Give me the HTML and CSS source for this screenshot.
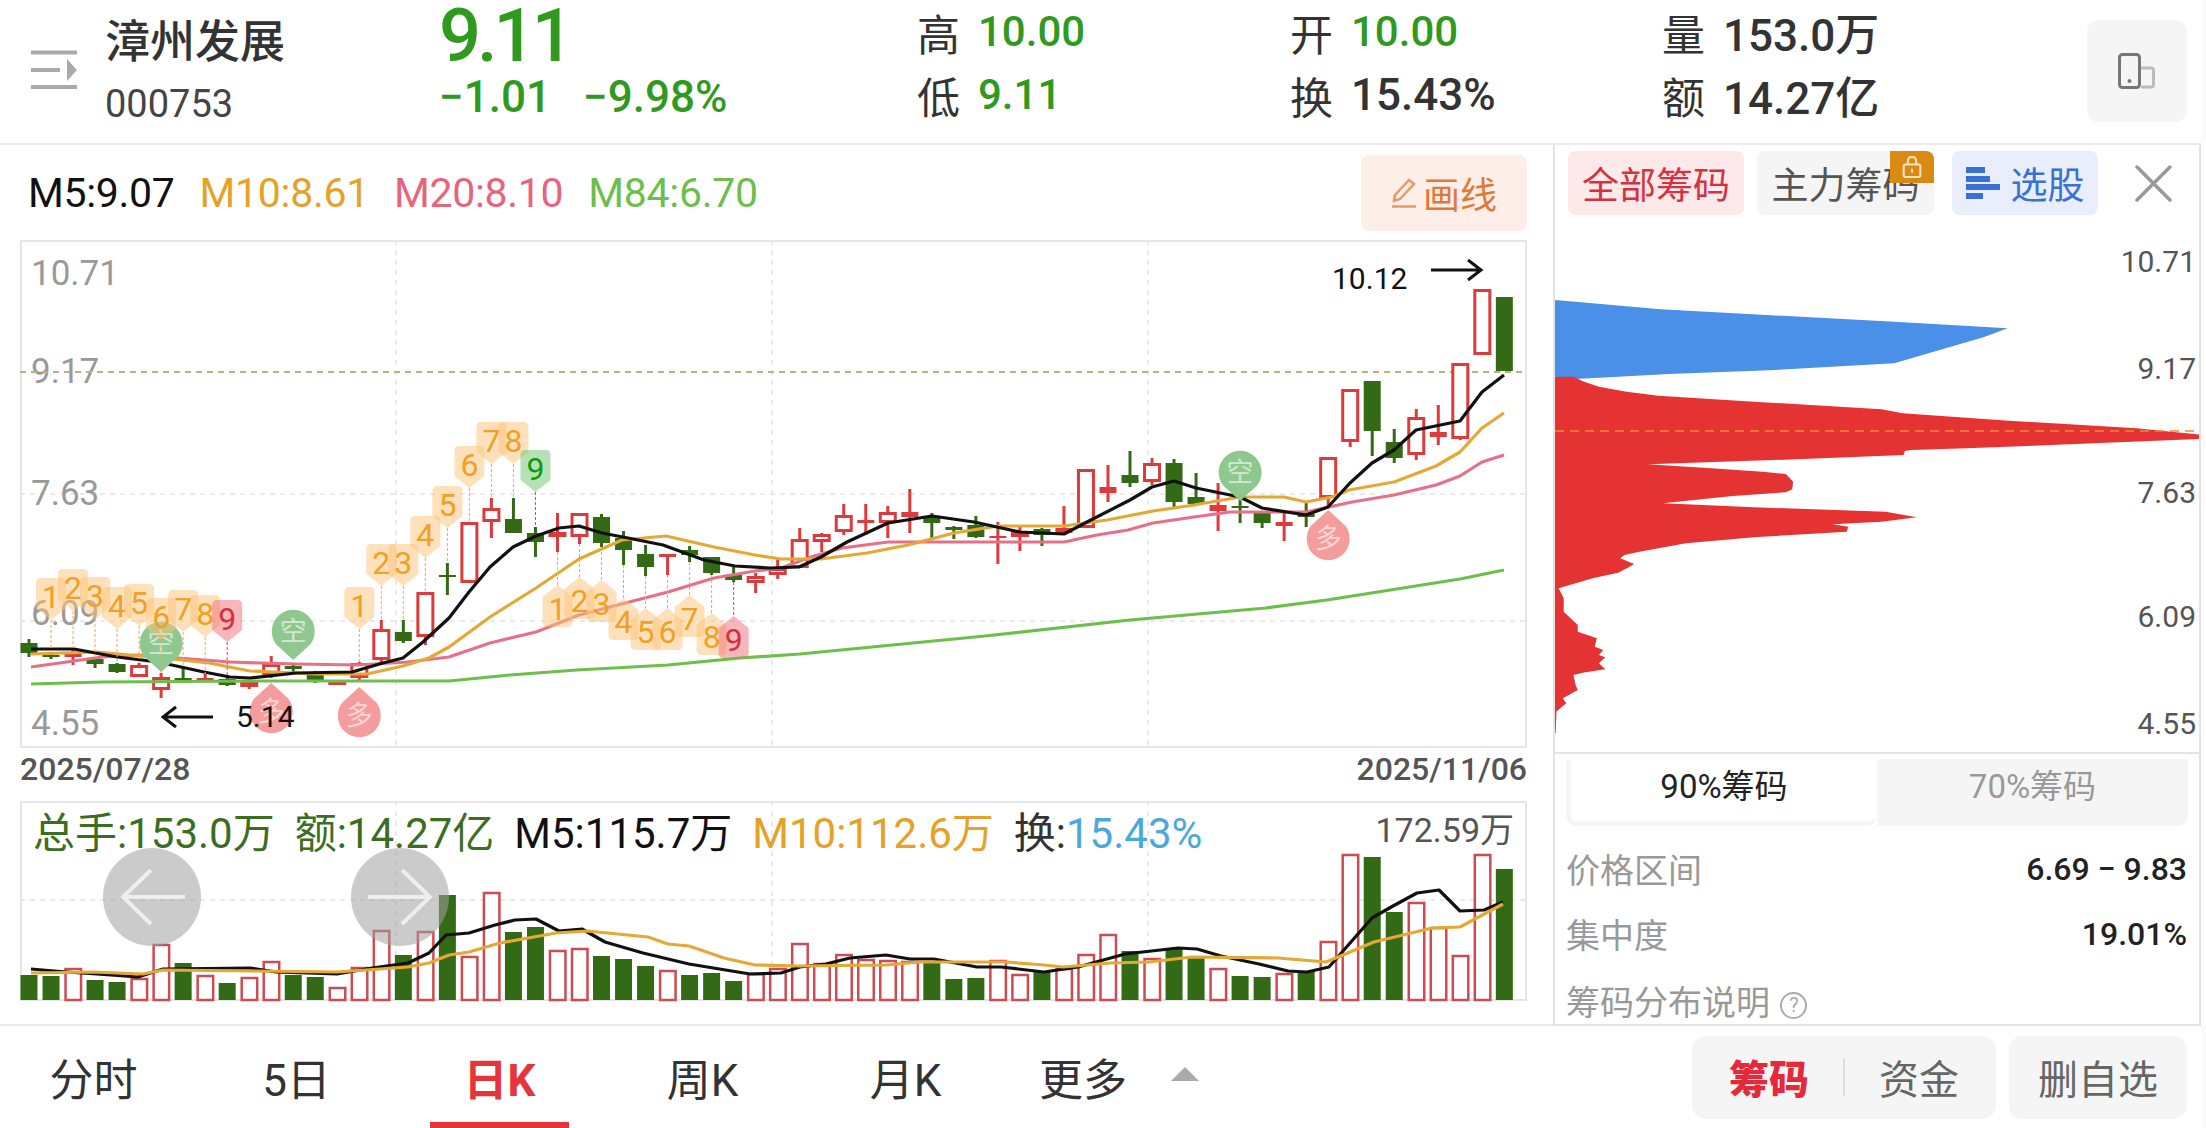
FILE: index.html
```html
<!doctype html>
<html lang="zh-CN">
<head>
	<meta charset="utf-8">
	<meta name="viewport" content="width=device-width, initial-scale=1">
	<title>漳州发展 000753</title>
	<link rel="stylesheet" href="styles.css">
</head>
<body>

	<header class="quote-bar">
		<svg class="menu-icon" viewBox="0 0 46 40">
			<path d="M0 2.500H46M0 37H46" />
			<path d="M0 20H29" />
			<polygon points="36,9 46,20 36,31" />
		</svg>
		<div class="stock">
			<h1>漳州发展</h1>
			<span>000753</span>
		</div>
		<div class="price">
			<div class="price-now">9.11</div>
			<div class="price-change"><span>−1.01</span><span>−9.98%</span></div>
		</div>
		<div class="stat-col">
			<div class="stat"><span>高</span><b class="down">10.00</b></div>
			<div class="stat"><span>低</span><b class="down">9.11</b></div>
		</div>
		<div class="stat-col">
			<div class="stat"><span>开</span><b class="down">10.00</b></div>
			<div class="stat"><span>换</span><b>15.43%</b></div>
		</div>
		<div class="stat-col">
			<div class="stat"><span>量</span><b>153.0万</b></div>
			<div class="stat"><span>额</span><b>14.27亿</b></div>
		</div>
		<div class="device-btn">
			<svg viewBox="0 0 38 36">
				<path class="device-back" d="M23 15h10q2.500 0 2.500 2.500v14q0 2.500-2.500 2.500H23" />
				<rect class="device-front" x="1.500" y="1.500" width="20" height="33" rx="3" />
				<circle class="device-dot" cx="11.500" cy="28" r="2" />
			</svg>
		</div>
	</header>

	<main class="workspace">

		<section class="kline-pane">
			<div class="ma-row">
				<span class="ma5">M5:9.07</span>
				<span class="ma10">M10:8.61</span>
				<span class="ma20">M20:8.10</span>
				<span class="ma84">M84:6.70</span>
				<div class="draw-btn">
					<svg viewBox="0 0 26 30">
						<path d="M18 2l5 4L9 21l-6 2 1-6z" />
						<path d="M1 28.500H25" />
					</svg>
					画线
				</div>
			</div>
			<svg id="kline" class="kline" viewBox="20 240 1507 508"></svg>
			<div class="date-row"><span>2025/07/28</span><span>2025/11/06</span></div>
			<div class="volume">
				<svg id="volume" class="volume-chart" viewBox="20 801 1507 201"></svg>
				<div class="vol-legend">
					<span class="vol-green">总手:153.0万</span>
					<span class="vol-green">额:14.27亿</span>
					<span class="ma5">M5:115.7万</span>
					<span class="ma10">M10:112.6万</span>
					<span>换:<i class="vol-blue">15.43%</i></span>
				</div>
				<span class="vol-max">172.59万</span>
			</div>
		</section>

		<aside class="chip-pane">
			<div class="chip-tabs">
				<div class="chip-tab chip-all">全部筹码</div>
				<div class="chip-tab chip-main">
					主力筹码
					<span class="lock">
						<svg viewBox="0 0 24 28">
							<path d="M7 11V7q0-5 5-5t5 5v4" />
							<rect x="2" y="11" width="20" height="15" rx="2" />
							<path d="M12 16v5" />
						</svg>
					</span>
				</div>
				<div class="chip-tab chip-pick">
					<svg viewBox="0 0 34 32">
						<path d="M0 0h19v6H0zM0 9h24v6H0zM0 17h34v6H0zM0 26h17v6H0z" />
					</svg>
					选股
				</div>
				<svg class="chip-close" viewBox="0 0 36 36"><path d="M2 2L34 34M34 2L2 34" /></svg>
			</div>
			<svg class="chip-chart" viewBox="0 0 644 497">
				<g transform="scale(.4248 .3333) translate(-31.500 0)">
					<polygon class="chip-blue" points="30,150 280,178 830,215 1097,235 1040,262 830,340 550,360 300,372 80,387 30,380" />
					<polygon class="chip-red" points="30,380 75,380 100,395 135,410 200,425 275,437 500,455 800,478 850,490 1100,512 1400,535 1556,555 1556,567 1300,580 1000,595 870,600 855,603 852,615 600,628 250,643 400,655 520,665 575,672 592,695 590,718 575,727 450,738 285,760 500,772 810,785 883,802 800,815 685,823 722,830 718,845 500,862 340,880 230,905 195,915 185,925 218,942 205,952 180,968 120,985 40,1015 52,1045 52,1085 85,1125 85,1145 130,1165 125,1190 145,1200 135,1215 150,1222 135,1240 150,1258 100,1268 75,1275 80,1305 85,1320 50,1345 58,1360 35,1385 33,1450 30,1450" />
				</g>
				<line class="chip-cost" x1="0" y1="181" x2="644" y2="181" />
				<text class="chip-axis" x="641" y="11">10.71</text>
				<text class="chip-axis" x="641" y="118">9.17</text>
				<text class="chip-axis" x="641" y="242">7.63</text>
				<text class="chip-axis" x="641" y="366">6.09</text>
				<text class="chip-axis" x="641" y="473">4.55</text>
			</svg>
			<div class="range-switch">
				<div class="range-on">90%筹码</div>
				<div>70%筹码</div>
			</div>
			<div class="chip-row"><span>价格区间</span><b>6.69 − 9.83</b></div>
			<div class="chip-row"><span>集中度</span><b>19.01%</b></div>
			<div class="chip-row chip-row-last">
				<span class="chip-help">筹码分布说明 <i>?</i></span>
			</div>
		</aside>

	</main>

	<footer class="tab-bar">
		<nav class="periods">
			<a>分时</a>
			<a>5日</a>
			<a class="period-on">日K</a>
			<a>周K</a>
			<a>月K</a>
			<a class="period-more">更多<i></i></a>
		</nav>
		<div class="action-group">
			<span class="action-on">筹码</span>
			<span class="action-split"></span>
			<span>资金</span>
		</div>
		<div class="action-remove">删自选</div>
	</footer>

	<script src="chart.js"></script>
</body>
</html>
```

FILE: styles.css
```css
:root {
	--line: #ebebeb;
	--grid: #e6e6e6;
	--panel: #f5f5f5;
	--text: #333;
	--muted: #999;
	--red: #dc3a3c;
	--green: #2f9a1e;
	--bar-green: #336a16;
	--ma5: #111;
	--ma10: #e5a128;
	--ma20: #e8647c;
	--ma84: #6cbf4a;
	--page-width: 2201px;
}

* {
	box-sizing: border-box;
}

html, body {
	height: 100%;
}

body {
	width: 2206px;
	height: 1128px;
	margin: 0;
	overflow: hidden;
	display: flex;
	flex-direction: column;
	background: #fbfbfb;
	color: var(--text);
	font-family: Roboto, "Noto Sans CJK SC", sans-serif;
}

/* top quote bar */
.quote-bar {
	flex: none;
	width: var(--page-width);
	height: 145px;
	display: grid;
	grid-template-columns: 74px 334px 478px 373px 372px 425px 100px;
	padding-left: 31px;
	background: #fff;
	border-bottom: 2px solid var(--line);
}

.menu-icon {
	width: 46px;
	height: 40px;
	margin-top: 50px;
}
.menu-icon path {
	stroke: #aaa;
	stroke-width: 4;
	fill: none;
}
.menu-icon polygon {
	fill: #aaa;
}

.stock h1 {
	margin: 12px 0 0;
	font-size: 45px;
	font-weight: 500;
	line-height: 62px;
}
.stock span {
	display: block;
	margin-top: 2px;
	font-size: 38px;
	line-height: 56px;
	color: #444;
}

.price {
	color: var(--green);
}
.price-now {
	font-size: 74px;
	font-weight: 500;
	line-height: 72px;
	letter-spacing: -4px;
}
.price-change {
	display: flex;
	gap: 32px;
	font-size: 44px;
	font-weight: 500;
	line-height: 52px;
	margin-top: -1px;
}

.stat {
	height: 63px;
	display: flex;
	align-items: center;
	gap: 18px;
	font-size: 43px;
}
.stat b {
	font-size: 44px;
	font-weight: 500;
}
.stat .down {
	font-size: 42px;
	color: var(--green);
}

.device-btn {
	height: 102px;
	margin-top: 20px;
	display: flex;
	align-items: center;
	justify-content: center;
	border-radius: 12px;
	background: var(--panel);
}
.device-btn svg {
	width: 38px;
	height: 36px;
}
.device-front {
	fill: none;
	stroke: #777;
	stroke-width: 3;
}
.device-back {
	fill: none;
	stroke: #bbb;
	stroke-width: 3;
}
.device-dot {
	fill: #777;
}

/* main area */
.workspace {
	flex: none;
	width: var(--page-width);
	height: 881px;
	display: flex;
	background: #fff;
}

.kline-pane {
	flex: none;
	width: 1553px;
	height: 881px;
	padding-left: 20px;
	border-bottom: 2px solid var(--line);
}

.ma-row {
	height: 95px;
	display: flex;
	align-items: center;
	gap: 25px;
	width: 1507px;
	padding-left: 8px;
	font-size: 41px;
	letter-spacing: -0.3px;
}
.ma5 { color: var(--ma5); }
.ma10 { color: var(--ma10); }
.ma20 { color: var(--ma20); }
.ma84 { color: var(--ma84); }

.draw-btn {
	margin-left: auto;
	width: 166px;
	height: 76px;
	display: flex;
	align-items: center;
	justify-content: center;
	gap: 6px;
	border-radius: 8px;
	background: #fdeee8;
	color: #dd7a3a;
	font-size: 37px;
	letter-spacing: 0;
}
.draw-btn svg {
	width: 26px;
	height: 30px;
}
.draw-btn path {
	fill: none;
	stroke: #e59a68;
	stroke-width: 2.500;
}

.kline {
	display: block;
	width: 1507px;
	height: 508px;
}

.date-row {
	width: 1507px;
	height: 53px;
	padding-bottom: 12px;
	display: flex;
	justify-content: space-between;
	align-items: center;
	font-size: 32px;
	font-weight: 500;
	color: #555;
}

.volume {
	position: relative;
	width: 1507px;
	height: 201px;
}
.volume-chart {
	display: block;
	width: 1507px;
	height: 201px;
}
.vol-legend {
	position: absolute;
	top: 11px;
	left: 13px;
	display: flex;
	gap: 20px;
	font-size: 42px;
	line-height: 44px;
}
.vol-green { color: #3c6e1f; }
.vol-legend i {
	font-style: normal;
}
.vol-blue { color: #4aa8dd; }
.vol-max {
	position: absolute;
	top: 8px;
	right: 13px;
	font-size: 34px;
	line-height: 42px;
	color: #555;
}

/* svg parts of the charts */
.frame {
	fill: none;
	stroke: var(--grid);
	stroke-width: 2;
}
.grid-line {
	stroke: #e4e4e4;
	stroke-width: 1.500;
	stroke-dasharray: 5 5;
}
.last-line {
	stroke: #bdae84;
	stroke-width: 2;
	stroke-dasharray: 6 5;
}
.axis-left {
	font-size: 35px;
	fill: var(--muted);
	dominant-baseline: central;
}
.wick-up, .wick-down {
	stroke-width: 3;
}
.wick-up { stroke: var(--red); }
.wick-down { stroke: var(--bar-green); }
.body-hollow {
	fill: #fff;
	stroke: var(--red);
	stroke-width: 3;
}
.body-red { fill: var(--red); }
.body-green { fill: var(--bar-green); }
.vol-up {
	fill: #fff;
	stroke: #cc4c52;
	stroke-width: 2.500;
}
.ma-line {
	fill: none;
	stroke-width: 3.200;
	stroke-linejoin: round;
}
.line-ma5 { stroke: var(--ma5); }
.line-ma10 { stroke: #e6a835; }
.line-ma20 { stroke: #e77087; }
.line-ma84 { stroke: var(--ma84); }

.stem {
	stroke: #f0a94a;
	stroke-width: 1;
	stroke-dasharray: 3 2;
}
.stem-red { stroke: #d9484c; }
.stem-green { stroke: #2aa02a; }

.td-badge { fill: rgba(253, 196, 120, .5); }
.td-badge-red { fill: rgba(240, 110, 115, .5); }
.td-badge-green { fill: rgba(90, 190, 90, .45); }
.td-num {
	font-size: 32px;
	fill: #f0a024;
	text-anchor: middle;
	dominant-baseline: central;
}
.td-num-red { fill: #d62f3c; }
.td-num-green { fill: #0c9a0c; }

.pin-green { fill: #8fc88f; }
.pin-red { fill: #f59c9c; }
.pin-text {
	font-size: 27px;
	text-anchor: middle;
	dominant-baseline: central;
	fill: rgba(255, 255, 255, .6);
}
.note {
	font-size: 30px;
	fill: #111;
	dominant-baseline: central;
}
.note-arrow {
	fill: none;
	stroke: #111;
	stroke-width: 3;
}
.nav-circle { fill: rgba(160, 160, 160, .55); }
.nav-arrow {
	fill: none;
	stroke: #eee;
	stroke-width: 4;
}

/* right chip panel */
.chip-pane {
	flex: none;
	width: 648px;
	height: 881px;
	overflow: hidden;
	border-left: 2px solid #e4e4e4;
	border-right: 2px solid #e4e4e4;
	border-bottom: 2px solid #e4e4e4;
}

.chip-tabs {
	margin-top: 6px;
	padding-left: 13px;
	height: 64px;
	display: flex;
	align-items: center;
}
.chip-tab {
	position: relative;
	height: 64px;
	display: flex;
	align-items: center;
	justify-content: center;
	border-radius: 8px;
	font-size: 37px;
}
.chip-all {
	width: 176px;
	background: #fde8ea;
	color: #d7303f;
}
.chip-main {
	width: 177px;
	margin-left: 13px;
	background: var(--panel);
	color: #555;
}
.chip-pick {
	width: 146px;
	margin-left: 18px;
	gap: 11px;
	background: #e8eefb;
	color: #3a6fd6;
}
.chip-pick svg {
	width: 34px;
	height: 32px;
	fill: #3a6fd6;
}
.lock {
	position: absolute;
	top: 0;
	right: 0;
	width: 44px;
	height: 32px;
	display: flex;
	align-items: center;
	justify-content: center;
	border-radius: 0 8px 0 0;
	background: #d98a12;
}
.lock svg {
	width: 20px;
	height: 24px;
}
.lock path, .lock rect {
	fill: none;
	stroke: #f6e3c0;
	stroke-width: 2.500;
}
.chip-close {
	width: 37px;
	height: 37px;
	margin-left: 37px;
}
.chip-close path {
	fill: none;
	stroke: #999;
	stroke-width: 3.500;
	stroke-linecap: round;
}

.chip-chart {
	display: block;
	width: 644px;
	height: 497px;
	margin-top: 35px;
	overflow: visible;
}
.chip-blue { fill: #4a8fe8; }
.chip-red { fill: #e53333; }
.chip-cost {
	stroke: #f08a3c;
	stroke-width: 1.500;
	stroke-dasharray: 9 6;
}
.chip-axis {
	font-size: 30px;
	fill: #555;
	text-anchor: end;
	dominant-baseline: central;
}

.range-switch {
	margin-top: 5px;
	border-top: 2px solid #e4e4e4;
	padding: 5px 11px 0;
	height: 74px;
	display: grid;
	grid-template-columns: 1fr 1fr;
	font-size: 33px;
	text-align: center;
	color: var(--muted);
}
.range-switch > div {
	line-height: 56px;
	background: var(--panel);
}
.range-switch > div:last-child {
	border-radius: 0 0 10px 0;
	height: 67px;
}
.range-switch .range-on {
	height: 67px;
	color: #222;
	background: #fff;
	border: solid var(--panel);
	border-width: 0 0 5px 5px;
	border-radius: 0 0 10px 10px;
}

.chip-row {
	height: 65px;
	margin: 0 12px 0 11px;
	display: flex;
	align-items: center;
	justify-content: space-between;
	font-size: 34px;
	color: var(--muted);
}
.range-switch + .chip-row {
	margin-top: 10px;
}
.chip-row b {
	font-size: 32px;
	font-weight: 500;
	color: #222;
}
.chip-row-last {
	height: 57px;
	align-items: flex-start;
	padding-top: 17px;
	line-height: 40px;
}
.chip-help i {
	display: inline-flex;
	align-items: center;
	justify-content: center;
	width: 27px;
	height: 27px;
	margin-left: 2px;
	border: 2px solid #aaa;
	border-radius: 50%;
	font-size: 20px;
	font-style: normal;
	color: #aaa;
	vertical-align: 3px;
}

/* bottom tabs */
.tab-bar {
	flex: none;
	width: var(--page-width);
	height: 102px;
	display: flex;
	align-items: center;
	padding-right: 14px;
	background: #fff;
}

.periods {
	display: flex;
	height: 102px;
	margin-left: -8px;
	font-size: 44px;
}
.periods a {
	width: 203px;
	display: flex;
	align-items: center;
	justify-content: center;
	position: relative;
}
.period-on {
	color: #e5343a;
	font-weight: 700;
}
.period-on::after {
	content: "";
	position: absolute;
	left: 32px;
	right: 32px;
	bottom: 0;
	height: 6px;
	background: #e5343a;
}
.periods .period-more {
	width: auto;
	margin-left: 32px;
	gap: 44px;
}
.period-more i {
	width: 0;
	height: 0;
	border: solid transparent;
	border-width: 0 14px 14px;
	border-bottom-color: #aaa;
	margin-top: -6px;
}

.action-group {
	margin-left: auto;
	width: 304px;
	height: 83px;
	display: flex;
	align-items: center;
	justify-content: center;
	gap: 34px;
	border-radius: 14px;
	background: var(--panel);
	font-size: 40px;
	color: #666;
}
.action-on {
	color: #e5283a;
	font-weight: 900;
}
.action-split {
	width: 2px;
	height: 38px;
	background: #ddd;
}
.action-remove {
	width: 178px;
	height: 83px;
	margin-left: 13px;
	display: flex;
	align-items: center;
	justify-content: center;
	border-radius: 14px;
	background: var(--panel);
	font-size: 40px;
	color: #666;
}
```

FILE: chart.js
```js
// pixel data read off the chart, y values are page pixels
const NS = 'http://www.w3.org/2000/svg';

const barX = i => 29 + 22.02 * i;

// type, wick top, body top, body bottom, wick bottom
// h = hollow red, r = filled red, g = green
const candles = [
	['g',639,643,653,657], ['g',653,655,657,659], ['r',648,654,657,665], ['g',658,659,664,668],
	['g',663,664,672,673], ['h',663,665,677,677], ['h',673,677,690,698], ['g',667,678,680,683],
	['r',674,678,681,682], ['g',677,679,685,686], ['h',682,682,687,689], ['h',656,664,675,678],
	['g',663,666,669,672], ['g',671,672,682,683], ['h',681,681,683,683], ['h',662,663,678,682],
	['h',620,629,660,662], ['g',620,632,641,643], ['h',592,592,637,645], ['g',563,575,577,595],
	['h',522,522,583,583], ['h',498,508,522,538], ['g',498,519,533,533], ['g',527,533,542,557],
	['h',513,532,537,552], ['h',513,513,537,544], ['g',514,517,543,547], ['g',531,538,550,565],
	['g',545,554,567,576], ['r',554,554,557,575], ['g',546,550,555,562], ['g',557,557,573,575],
	['g',567,575,580,582], ['h',573,576,583,593], ['h',558,568,575,579], ['h',528,539,568,568],
	['h',533,534,542,552], ['h',504,515,532,535], ['r',504,520,523,535], ['h',506,512,523,538],
	['r',489,512,517,533], ['g',513,517,523,540], ['g',526,527,530,539], ['g',516,525,537,538],
	['r',522,536,538,564], ['h',527,532,537,551], ['g',528,529,535,546], ['r',506,528,533,533],
	['h',469,469,528,528], ['r',465,487,493,502], ['g',451,475,483,487], ['h',458,463,482,485],
	['g',459,463,502,507], ['g',473,497,504,505], ['r',483,505,511,531], ['g',497,506,508,523],
	['g',511,512,523,528], ['r',512,522,526,541], ['g',503,514,517,527], ['h',457,457,498,507],
	['h',389,389,442,447], ['g',381,381,431,456], ['g',429,442,458,463], ['h',409,417,455,460],
	['r',405,432,437,445], ['h',363,363,439,440], ['h',289,289,355,355], ['g',297,297,371,371],
];

const maLines = {
	'line-ma84': [[31,684],[102,682],[255,681],[449,681],[510,675],[577,670],[668,665],[740,658],[800,654],[985,636],[1130,620],[1266,608],[1327,600],[1460,579],[1504,570]],
	'line-ma20': [[31,667],[102,657],[138,655],[230,662],[296,664],[357,665],[408,662],[449,657],[490,643],[536,632],[579,615],[668,592],[714,578],[755,571],[781,568],[811,557],[842,548],[888,542],[998,542],[1064,542],[1097,535],[1128,530],[1153,523],[1194,517],[1230,512],[1306,512],[1352,502],[1394,495],[1436,485],[1460,476],[1482,462],[1504,455]],
	'line-ma10': [[31,654],[97,652],[163,658],[209,663],[250,671],[316,674],[367,674],[403,666],[429,658],[449,647],[490,617],[536,588],[579,559],[622,540],[666,536],[714,547],[755,555],[781,559],[821,559],[867,553],[908,545],[954,533],[998,526],[1064,526],[1107,520],[1153,511],[1194,505],[1240,497],[1284,497],[1306,502],[1332,497],[1349,490],[1394,482],[1436,466],[1460,452],[1482,428],[1504,413]],
	'line-ma5': [[31,649],[74,649],[117,657],[158,662],[204,672],[230,677],[250,678],[296,673],[352,672],[383,663],[403,658],[423,642],[449,618],[469,592],[490,567],[513,547],[536,536],[559,528],[579,526],[602,533],[628,538],[663,545],[704,560],[735,566],[770,568],[799,567],[821,557],[847,542],[888,523],[932,516],[974,522],[1020,532],[1064,534],[1087,522],[1130,500],[1152,487],[1174,481],[1196,488],[1240,497],[1262,508],[1306,515],[1328,507],[1350,483],[1372,463],[1394,450],[1416,430],[1460,421],[1482,392],[1504,375]],
};

// bar index, top of badge, number
const tdAbove = [
	[1,578,1],[2,569,2],[3,577,3],[4,587,4],[5,584,5],[6,598,6],[7,590,7],[8,595,8],[9,600,9],
	[15,587,1],[16,544,2],[17,544,3],[18,516,4],[19,486,5],[20,446,6],[21,422,7],[22,422,8],[23,450,9],
];
const tdBelow = [
	[24,585,1],[25,577,2],[26,580,3],[27,598,4],[28,608,5],[29,608,6],[30,595,7],[31,613,8],[32,616,9],
];

// volume bar tops, 1 = up day
const volumes = [
	[975,0],[976,0],[968,1],[980,0],[982,0],[978,1],[944,1],[963,0],[975,1],[983,0],[977,1],[961,1],
	[975,0],[977,0],[987,1],[967,1],[930,1],[955,0],[931,1],[895,0],[956,1],[892,1],[932,0],[927,0],
	[950,1],[948,1],[956,0],[959,0],[966,0],[970,1],[975,0],[973,0],[981,0],[973,1],[968,1],[943,1],
	[963,1],[954,1],[959,1],[960,1],[961,1],[962,0],[979,0],[978,0],[960,1],[974,1],[972,0],[968,1],
	[954,1],[934,1],[951,0],[958,1],[949,0],[957,0],[968,1],[976,0],[977,0],[973,1],[972,0],[941,1],
	[854,1],[857,0],[912,0],[902,1],[927,1],[955,1],[854,1],[869,0],
];
const VOL_BASE = 1000;

const volLines = {
	'line-ma5': [[31,969],[66,972],[97,974],[138,977],[163,969],[250,968],[276,972],[337,974],[372,968],[408,963],[429,953],[446,935],[469,933],[495,925],[515,920],[536,919],[559,931],[582,929],[605,942],[643,953],[689,964],[750,974],[781,973],[800,967],[826,964],[850,958],[886,955],[910,959],[934,959],[977,967],[1001,967],[1044,972],[1078,967],[1125,954],[1178,948],[1197,949],[1221,956],[1259,964],[1288,971],[1307,972],[1329,967],[1372,918],[1393,906],[1417,893],[1439,890],[1460,911],[1484,910],[1503,902]],
	'line-ma10': [[31,973],[92,972],[143,974],[163,970],[255,971],[337,972],[408,967],[429,963],[449,955],[469,952],[500,943],[556,933],[587,931],[648,937],[668,944],[689,946],[724,958],[755,965],[800,966],[886,965],[920,962],[1006,962],[1044,965],[1063,967],[1111,963],[1149,962],[1192,957],[1278,958],[1326,962],[1374,942],[1432,928],[1460,927],[1503,904]],
};

function add(parent, tag, attrs, text) {
	const el = document.createElementNS(NS, tag);
	for (const key in attrs) el.setAttribute(key, attrs[key]);
	if (text !== undefined) el.textContent = text;
	parent.appendChild(el);
	return el;
}

function drawGrid(svg, top, bottom, rows) {
	[396, 772, 1148].forEach(x => {
		add(svg, 'line', { class: 'grid-line', x1: x, y1: top, x2: x, y2: bottom });
	});
	rows.forEach(y => {
		add(svg, 'line', { class: 'grid-line', x1: 20, y1: y, x2: 1527, y2: y });
	});
	add(svg, 'rect', { class: 'frame', x: 21, y: top + 1, width: 1505, height: bottom - top - 2 });
}

function drawLines(svg, lines) {
	for (const name in lines) {
		add(svg, 'polyline', { class: 'ma-line ' + name, points: lines[name].join(' ') });
	}
}

function drawPin(svg, x, top, isUp) {
	// up pins have their point on top, the label 多 sits under the bar
	const r = 21.5;
	if (isUp) {
		const cy = top + 50 - r;
		add(svg, 'path', { class: 'pin-red', d: `M${x} ${top}L${x + 17} ${cy - 13}A${r} ${r} 0 1 1 ${x - 17} ${cy - 13}Z` });
		add(svg, 'text', { class: 'pin-text', x: x, y: cy }, '多');
	} else {
		const cy = top + r;
		add(svg, 'path', { class: 'pin-green', d: `M${x} ${top + 50}L${x - 17} ${cy + 13}A${r} ${r} 0 1 1 ${x + 17} ${cy + 13}Z` });
		add(svg, 'text', { class: 'pin-text', x: x, y: cy }, '空');
	}
}

function drawTd(svg, item, below) {
	const [bar, top, num] = item;
	const x = barX(bar);
	const candle = candles[bar];
	let suffix = '';
	if (num === 9) suffix = (bar === 23) ? '-green' : '-red';

	const stem = 'stem' + (suffix ? ' stem' + suffix : '');
	const badge = 'td-badge' + (suffix ? ' td-badge' + suffix : '');
	const label = 'td-num' + (suffix ? ' td-num' + suffix : '');

	if (below) {
		add(svg, 'line', { class: stem, x1: x, y1: candle[4], x2: x, y2: top });
		add(svg, 'path', { class: badge, d: `M${x} ${top}L${x + 15} ${top + 12}v25q0 5-5 5h-20q-5 0-5-5v-25Z` });
		add(svg, 'text', { class: label, x: x, y: top + 24 }, num);
	} else {
		add(svg, 'line', { class: stem, x1: x, y1: top + 42, x2: x, y2: candle[1] });
		add(svg, 'path', { class: badge, d: `M${x - 15} ${top + 5}q0-5 5-5h20q5 0 5 5v25L${x} ${top + 42}L${x - 15} ${top + 30}Z` });
		add(svg, 'text', { class: label, x: x, y: top + 19 }, num);
	}
}

function drawKline() {
	const svg = document.getElementById('kline');
	drawGrid(svg, 240, 748, [494, 621]);

	[['10.71',273],['9.17',371],['7.63',493],['6.09',613],['4.55',723]].forEach(([label, y]) => {
		add(svg, 'text', { class: 'axis-left', x: 31, y: y }, label);
	});
	add(svg, 'line', { class: 'last-line', x1: 20, y1: 372, x2: 1527, y2: 372 });

	candles.forEach((c, i) => {
		const [type, wickTop, bodyTop, bodyBottom, wickBottom] = c;
		const x = barX(i);
		const up = type !== 'g';
		add(svg, 'line', { class: up ? 'wick-up' : 'wick-down', x1: x, y1: wickTop, x2: x, y2: wickBottom });
		if (type === 'h') {
			add(svg, 'rect', { class: 'body-hollow', x: x - 7.5, y: bodyTop + 1.5, width: 15, height: Math.max(bodyBottom - bodyTop - 3, 1) });
		} else {
			add(svg, 'rect', { class: up ? 'body-red' : 'body-green', x: x - 8.5, y: bodyTop, width: 17, height: bodyBottom - bodyTop });
		}
	});

	drawLines(svg, maLines);

	drawPin(svg, barX(6), 622, false);
	drawPin(svg, barX(12), 610, false);
	drawPin(svg, barX(55), 451, false);
	drawPin(svg, barX(11), 683, true);
	drawPin(svg, barX(15), 687, true);
	drawPin(svg, barX(59), 510, true);

	tdAbove.forEach(item => drawTd(svg, item, false));
	tdBelow.forEach(item => drawTd(svg, item, true));

	// low / high notes
	add(svg, 'path', { class: 'note-arrow', d: 'M213 717H163M176 707L163 717L176 727' });
	add(svg, 'text', { class: 'note', x: 236, y: 716 }, '5.14');
	add(svg, 'text', { class: 'note', x: 1332, y: 278 }, '10.12');
	add(svg, 'path', { class: 'note-arrow', d: 'M1431 270H1481M1468 260L1481 270L1468 280' });
}

function drawVolume() {
	const svg = document.getElementById('volume');
	drawGrid(svg, 801, 1001, [900]);

	volumes.forEach(([top, up], i) => {
		const x = barX(i);
		if (up) {
			add(svg, 'rect', { class: 'vol-up', x: x - 7.5, y: top + 1, width: 15.500, height: VOL_BASE - top - 1 });
		} else {
			add(svg, 'rect', { class: 'body-green', x: x - 8.5, y: top, width: 17, height: VOL_BASE - top });
		}
	});

	drawLines(svg, volLines);

	// pager arrows over the chart
	add(svg, 'circle', { class: 'nav-circle', cx: 152, cy: 897, r: 49 });
	add(svg, 'path', { class: 'nav-arrow', d: 'M185 897H123M151 870L123 897L151 924' });
	add(svg, 'circle', { class: 'nav-circle', cx: 400, cy: 897, r: 49 });
	add(svg, 'path', { class: 'nav-arrow', d: 'M368 897H430M402 870L430 897L402 924' });
}

drawKline();
drawVolume();
```
